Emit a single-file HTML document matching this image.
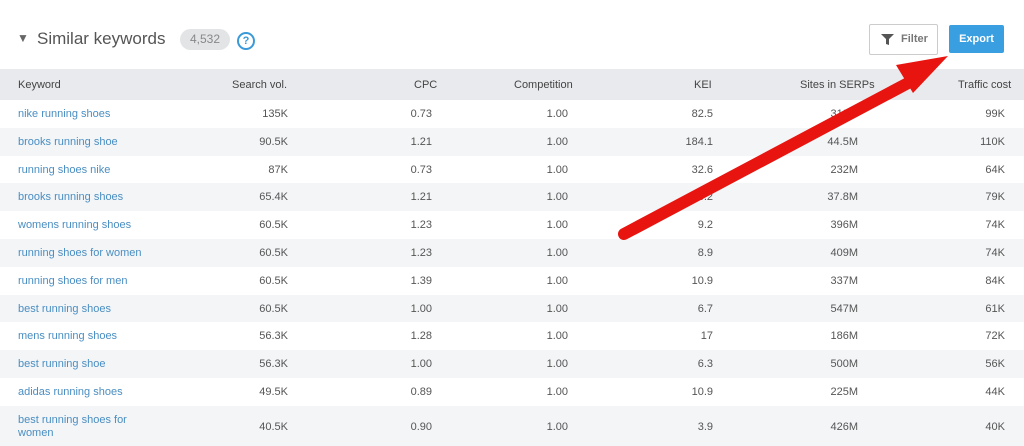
<!DOCTYPE html><html><head><style>
body{margin:0;width:1024px;height:444px;overflow:hidden;background:#fff;font-family:"Liberation Sans",sans-serif;position:relative}
.t{position:absolute;white-space:nowrap}
.row{position:absolute;left:0;width:1024px;height:28px;font-size:11px;color:#555}
.row span{position:absolute;top:8px}
.k{left:18px;color:#4a8ec2}
.r{text-align:right}
</style></head><body>
<div class="t" style="left:17px;top:31px;font-size:12px;color:#666">▼</div>
<div class="t" style="left:37px;top:29px;font-size:17px;color:#555">Similar keywords</div>
<div class="t" style="left:180px;top:29px;width:50px;height:21px;border-radius:11px;background:#e2e4e6;color:#888;font-size:12px;text-align:center;line-height:21px">4,532</div>
<div class="t" style="left:237px;top:32px;width:14px;height:14px;border:2px solid #3a9ad9;border-radius:50%;color:#3a9ad9;font-size:11px;font-weight:bold;text-align:center;line-height:14px">?</div>
<div class="t" style="left:869px;top:24px;width:67px;height:29px;border:1px solid #ccc;border-radius:2px;font-size:11px;color:#777;line-height:29px"><svg style="position:absolute;left:11px;top:8px" width="13" height="13" viewBox="0 0 13 13"><path d="M0 1h13L8 6v6L5 11V6z" fill="#555"/></svg><span style="position:absolute;left:31px;font-weight:bold">Filter</span></div>
<div class="t" style="left:949px;top:25px;width:55px;height:28px;background:#3a9fe0;border-radius:2px;color:#fff;font-size:11px;font-weight:bold;text-align:center;line-height:28px">Export</div>
<div class="row" style="top:69px;height:31px;background:#e8eaed;color:#444;font-size:11px">
<span style="left:18px;top:10px">Keyword</span><span style="left:232px;top:10px">Search vol.</span><span style="left:414px;top:10px">CPC</span><span style="left:514px;top:10px">Competition</span><span style="left:694px;top:10px">KEI</span><span style="left:800px;top:10px">Sites in SERPs</span><span style="left:958px;top:10px">Traffic cost</span></div>
<div id="rows"></div>
<script>
var d=[["nike running shoes","135K","0.73","82.5","312M","99K"],["brooks running shoe","90.5K","1.21","184.1","44.5M","110K"],["running shoes nike","87K","0.73","32.6","232M","64K"],["brooks running shoes","65.4K","1.21","3.2","37.8M","79K"],["womens running shoes","60.5K","1.23","9.2","396M","74K"],["running shoes for women","60.5K","1.23","8.9","409M","74K"],["running shoes for men","60.5K","1.39","10.9","337M","84K"],["best running shoes","60.5K","1.00","6.7","547M","61K"],["mens running shoes","56.3K","1.28","17","186M","72K"],["best running shoe","56.3K","1.00","6.3","500M","56K"],["adidas running shoes","49.5K","0.89","10.9","225M","44K"],["best running shoes for<br>women","40.5K","0.90","3.9","426M","40K"]];
var h="";d.forEach(function(r,i){var top=100+i*27.8,ht=i==11?40:28,y=i==11?15:8;
h+='<div class="row" style="top:'+top+'px;height:'+ht+'px;background:'+(i%2?'#f3f5f7':'#fff')+'"><span class="k" style="top:'+(i==11?8:8)+'px;line-height:13px">'+r[0]+'</span><span class="r" style="right:736px;top:'+y+'px">'+r[1]+'</span><span class="r" style="right:592px;top:'+y+'px">'+r[2]+'</span><span class="r" style="right:456px;top:'+y+'px">1.00</span><span class="r" style="right:311px;top:'+y+'px">'+r[3]+'</span><span class="r" style="right:166px;top:'+y+'px">'+r[4]+'</span><span class="r" style="right:19px;top:'+y+'px">'+r[5]+'</span></div>'});
document.getElementById("rows").innerHTML=h;
</script>
<svg style="position:absolute;left:0;top:0" width="1024" height="444"><line x1="624" y1="234" x2="910" y2="82" stroke="#e8140f" stroke-width="12" stroke-linecap="round"/><polygon points="948,56 896,65 913,93" fill="#e8140f"/></svg>
</body></html>
